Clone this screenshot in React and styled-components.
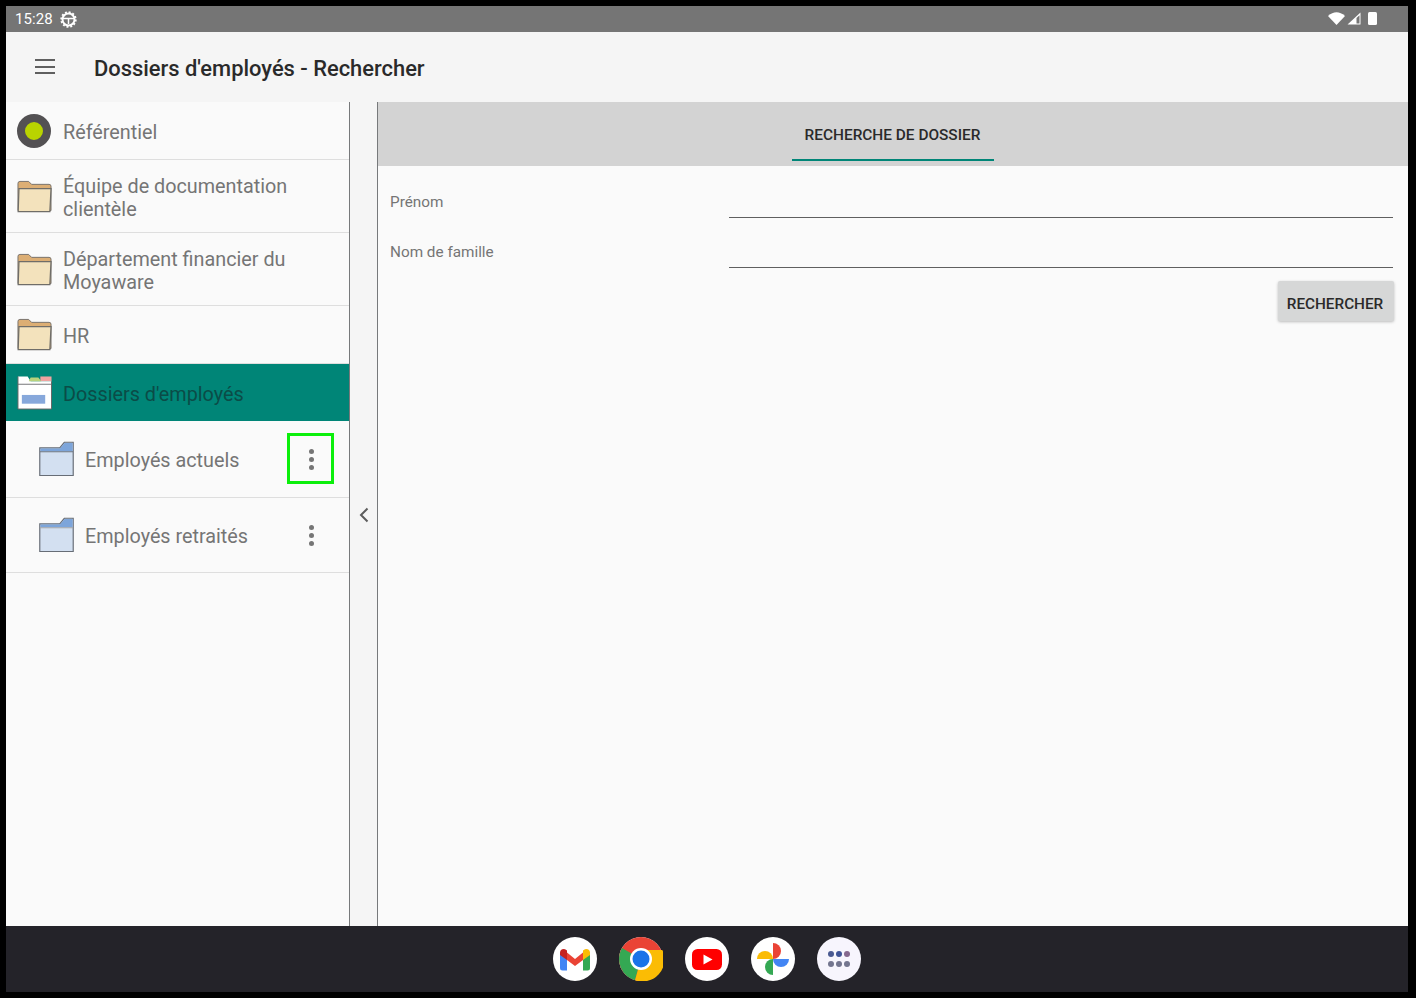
import styled, { createGlobalStyle } from "styled-components";

const GlobalStyle = createGlobalStyle`
  html, body { margin: 0; padding: 0; background: #000; }
  body { font-family: Roboto, "Liberation Sans", sans-serif; }
`;

const FolderIcon = () => (
  <svg width="35" height="33" viewBox="0 0 36 33">
    <path d="M1 31V3q0-2 2-2h9l3 3h18q2 0 2 2v25z" fill="#dcae74" stroke="#77716a" strokeWidth="1" />
    <path d="M2 8.500h33l-1.200 23.500H1.200z" fill="#f3e2bc" stroke="#6f6d68" strokeWidth="1.300" />
  </svg>
);

const FolderBlue = ({ line }) => (
  <svg width="35" height="36" viewBox="0 0 36 36">
    <path d="M.8 35V6.500h20.500L26 .8h9.200V35z" fill="#d3e0f1" stroke="#676d76" strokeWidth="1.200" />
    <path d="M1.400 10V7.200h20.200l4.700-5.700h8.300V10z" fill="#7da5da" />
    <path d="M1 10.500h34" stroke={line} strokeWidth="1.200" />
  </svg>
);

const CabinetIcon = () => (
  <svg width="35" height="36" viewBox="0 0 36 36">
    <path d="M24 6V1h11.500v5z" fill="#efa3a0" />
    <path d="M1 34.500V1h10l3 5h21.500v28.500z" fill="#fff" />
    <path d="M12 6l2-4h8L25 6z" fill="#b9d27c" />
    <path d="M1 9h34.500" stroke="#77777a" strokeWidth="1.200" />
    <path d="M1 1v33.500h34.500V6" fill="none" stroke="#666" strokeWidth="1" />
    <rect x="5" y="20" width="24" height="9" fill="#87a8db" />
  </svg>
);

const GmailIcon = () => (
  <svg width="30" height="23" viewBox="0 0 30 23">
    <path d="M0 4v16q0 2.500 2.500 2.500H7V9z" fill="#4285f4" />
    <path d="M30 4v16q0 2.500-2.500 2.500H23V9z" fill="#34a853" />
    <path d="M7 12V4.500L15 11l8-6.500V12l-8 6z" fill="#ea4335" />
    <path d="M0 5q0-4 4-4 1.500 0 3 1.500V12L0 7z" fill="#c5221f" />
    <path d="M30 5q0-4-4-4-1.500 0-3 1.500V12l7-5z" fill="#fbbc04" />
  </svg>
);

const ChromeIcon = () => (
  <svg width="44" height="44" viewBox="0 0 44 44">
    <circle cx="22" cy="22" r="22" fill="#ea4335" />
    <path d="M22 22 3 11A22 22 0 0 0 16 43.200z" fill="#34a853" />
    <path d="M22 22 16 43.200A22 22 0 0 0 43.300 13H22z" fill="#fbbc04" />
    <circle cx="22" cy="22" r="11" fill="#fff" />
    <circle cx="22" cy="22" r="8.500" fill="#1a73e8" />
  </svg>
);

const YoutubeIcon = () => (
  <svg width="30" height="21" viewBox="0 0 30 21">
    <rect width="30" height="21" rx="5.500" fill="#f00" />
    <path d="M11.500 5.500v10l9-5z" fill="#fff" />
  </svg>
);

const PhotosIcon = () => (
  <svg width="32" height="32" viewBox="0 0 32 32">
    <path d="M16 16V0a8 8 0 0 1 0 16z" fill="#ea4335" />
    <path d="M16 16h16a8 8 0 0 1-16 0z" fill="#4285f4" />
    <path d="M16 16v16a8 8 0 0 1 0-16z" fill="#34a853" />
    <path d="M16 16H0a8 8 0 0 1 16 0z" fill="#fbbc04" />
  </svg>
);

const AppsIcon = () => (
  <svg width="22" height="16" viewBox="0 0 22 16">
    <circle cx="3" cy="3" r="3" fill="#4a5a92" />
    <circle cx="11" cy="3" r="3" fill="#3f5497" />
    <circle cx="19" cy="3" r="3" fill="#85688e" />
    <circle cx="3" cy="13" r="3" fill="#73758f" />
    <circle cx="11" cy="13" r="3" fill="#73758f" />
    <circle cx="19" cy="13" r="3" fill="#73758f" />
  </svg>
);

const App = () => {
  return (
    <Screen>
      <GlobalStyle />
      <StatusBar>
        <StatusLeft>
          <span>15:28</span>
          <svg width="17" height="17" viewBox="0 0 17 17">
            <circle cx="8.500" cy="8.500" r="6" fill="none" stroke="#fff" strokeWidth="2" />
            <circle cx="8.500" cy="8.500" r="7.300" fill="none" stroke="#fff" strokeWidth="1.800" strokeDasharray="2 1.820" />
            <path d="M3 7.500h11M8.500 8v5" stroke="#fff" strokeWidth="1.500" />
          </svg>
        </StatusLeft>
        <StatusRight>
          <svg width="17" height="13" viewBox="0 0 17 13">
            <path d="M0 4Q8.500-3.500 17 4L8.500 13z" fill="#fff" />
          </svg>
          <svg width="14" height="13" viewBox="0 0 14 13">
            <path d="M.5 12.500 13.500.5v12zM9.500 6v5.500h3V3.200z" fill="#fff" fillRule="evenodd" />
          </svg>
          <Battery />
        </StatusRight>
      </StatusBar>

      <AppBar>
        <Burger>
          <i /><i /><i />
        </Burger>
        <Title>Dossiers d'employés - Rechercher</Title>
      </AppBar>

      <Main>
        <Tree>
          <Row $h={58}>
            <Status />
            <RowLabel>Référentiel</RowLabel>
          </Row>
          <Row $h={73}>
            <IconSlot><FolderIcon /></IconSlot>
            <RowLabel>Équipe de documentation<br />clientèle</RowLabel>
          </Row>
          <Row $h={73}>
            <IconSlot><FolderIcon /></IconSlot>
            <RowLabel>Département financier du<br />Moyaware</RowLabel>
          </Row>
          <Row $h={58}>
            <IconSlot><FolderIcon /></IconSlot>
            <RowLabel>HR</RowLabel>
          </Row>
          <Row $h={57} $selected>
            <IconSlot><CabinetIcon /></IconSlot>
            <RowLabel $selected>Dossiers d'employés</RowLabel>
          </Row>
          <Row $h={77} $child>
            <IconSlot><FolderBlue line="#6d7480" /></IconSlot>
            <RowLabel>Employés actuels</RowLabel>
            <MoreButton aria-label="Plus"><i /><i /><i /></MoreButton>
            <Highlight />
          </Row>
          <Row $h={75} $child>
            <IconSlot><FolderBlue line="#a3a5a8" /></IconSlot>
            <RowLabel>Employés retraités</RowLabel>
            <MoreButton aria-label="Plus"><i /><i /><i /></MoreButton>
          </Row>
        </Tree>

        <Collapse>
          <svg width="10" height="16" viewBox="0 0 10 16">
            <path d="M8.500 1.500 2 8l6.500 6.500" fill="none" stroke="#5c5c5c" strokeWidth="2" />
          </svg>
        </Collapse>

        <Content>
          <Tabs>
            <Tab>RECHERCHE DE DOSSIER</Tab>
          </Tabs>
          <Form>
            <Field>
              <FieldLabel>Prénom</FieldLabel>
              <FieldInput />
            </Field>
            <Field>
              <FieldLabel>Nom de famille</FieldLabel>
              <FieldInput />
            </Field>
            <Actions>
              <SearchButton>RECHERCHER</SearchButton>
            </Actions>
          </Form>
        </Content>
      </Main>

      <Dock>
        <DockIcon><GmailIcon /></DockIcon>
        <DockIcon><ChromeIcon /></DockIcon>
        <DockIcon><YoutubeIcon /></DockIcon>
        <DockIcon><PhotosIcon /></DockIcon>
        <DockIcon $tint><AppsIcon /></DockIcon>
      </Dock>
    </Screen>
  );
};

const Screen = styled.div`
  width: 1416px;
  height: 998px;
  box-sizing: border-box;
  padding: 6px 8px 6px 6px;
  background: #000;
  display: flex;
  flex-direction: column;
  overflow: hidden;
`;

const StatusBar = styled.div`
  height: 26px;
  flex: none;
  background: #757575;
  color: #fff;
  display: flex;
  align-items: center;
  justify-content: space-between;
  padding: 0 31px 0 9px;
`;

const StatusLeft = styled.div`
  display: flex;
  align-items: center;
  gap: 7px;
  font-size: 15px;
  letter-spacing: 0.1px;
`;

const StatusRight = styled.div`
  display: flex;
  align-items: center;
  gap: 2px;
  margin-top: -1px;
`;

const Battery = styled.div`
  width: 9px;
  height: 13px;
  margin-left: 5px;
  background: #fff;
  border-radius: 1.500px;
`;

const AppBar = styled.div`
  height: 70px;
  flex: none;
  background: #f5f5f5;
  display: flex;
  align-items: center;
  padding-left: 29px;
  box-sizing: border-box;
`;

const Burger = styled.div`
  width: 20px;
  display: flex;
  flex-direction: column;
  gap: 4.500px;
  margin-top: -1px;

  i {
    display: block;
    height: 2px;
    background: #5f5f5f;
  }
`;

const Title = styled.h1`
  margin: 0 0 0 39px;
  padding-top: 2px;
  font-size: 21.900px;
  font-weight: 500;
  color: #2a2a2a;
`;

const Main = styled.div`
  flex: 1;
  min-height: 0;
  display: flex;
`;

const Tree = styled.div`
  width: 344px;
  flex: none;
  box-sizing: border-box;
  background: #fafafa;
  border-right: 1px solid #77797b;
`;

const Row = styled.div`
  position: relative;
  height: ${(p) => p.$h}px;
  box-sizing: border-box;
  display: flex;
  align-items: center;
  gap: 11px;
  padding-left: ${(p) => (p.$child ? 33 : 11)}px;
  background: ${(p) => (p.$selected ? "#008577" : "transparent")};
  border-bottom: ${(p) => (p.$selected ? "none" : "1px solid #dedede")};
`;

const Status = styled.div`
  width: 18px;
  height: 18px;
  flex: none;
  margin-right: 1px;
  border: 8.500px solid #535153;
  border-radius: 50%;
  background: #b9d400;
`;

const IconSlot = styled.div`
  width: 35px;
  height: 36px;
  flex: none;
  display: flex;
  align-items: center;
  justify-content: center;
`;

const RowLabel = styled.div`
  padding-top: 3px;
  font-size: 19.800px;
  line-height: 23px;
  color: ${(p) => (p.$selected ? "#0b4c47" : "#757575")};
`;

const MoreButton = styled.button`
  position: absolute;
  left: 293px;
  top: 50%;
  transform: translateY(-50%);
  width: 24px;
  height: 30px;
  padding: 0;
  border: 0;
  background: transparent;
  display: flex;
  flex-direction: column;
  align-items: center;
  justify-content: center;
  gap: 3px;

  i {
    width: 5px;
    height: 5px;
    border-radius: 50%;
    background: #757575;
  }
`;

const Highlight = styled.div`
  position: absolute;
  left: 281px;
  top: 12px;
  width: 47px;
  height: 51px;
  box-sizing: border-box;
  border: 3px solid #0bef0b;
  pointer-events: none;
`;

const Collapse = styled.div`
  width: 27px;
  flex: none;
  background: #f5f5f5;
  display: flex;
  align-items: center;
  justify-content: center;
  padding-top: 2px;
  border-right: 1px solid #77797b;
`;

const Content = styled.div`
  flex: 1;
  min-width: 0;
  background: #fafafa;
  display: flex;
  flex-direction: column;
`;

const Tabs = styled.div`
  height: 64px;
  flex: none;
  background: #d3d3d3;
  display: flex;
  justify-content: center;
  box-sizing: border-box;
  padding-right: 1px;
`;

const Tab = styled.div`
  width: 202px;
  height: 59px;
  box-sizing: border-box;
  border-bottom: 2px solid #008577;
  display: flex;
  align-items: center;
  justify-content: center;
  font-size: 15.400px;
  font-weight: 500;
  color: #2a2a2a;
  padding-top: 8px;
`;

const Form = styled.div`
  display: flex;
  flex-direction: column;
  padding: 0 15px 0 12px;
`;

const Field = styled.div`
  height: 50px;
  display: flex;
  align-items: stretch;
  padding-top: 2px;
  box-sizing: border-box;
`;

const FieldLabel = styled.div`
  width: 339px;
  flex: none;
  font-size: 15.300px;
  color: #757575;
  padding-top: 26px;
  line-height: 17px;
  height: 18px;
`;

const FieldInput = styled.div`
  flex: 1;
  height: 50px;
  box-sizing: border-box;
  border-bottom: 1px solid #5f5f5f;
`;

const Actions = styled.div`
  display: flex;
  justify-content: flex-end;
  margin-top: 15px;
  margin-right: -1px;
`;

const SearchButton = styled.button`
  width: 116px;
  height: 40px;
  padding: 5px 2px 0 0;
  border: 0;
  border-radius: 2px;
  background: #d6d7d7;
  box-shadow: 0 1px 3px rgba(0, 0, 0, 0.25);
  font-family: Roboto, "Liberation Sans", sans-serif;
  font-size: 15.300px;
  font-weight: 500;
  color: #2a2a2a;
`;

const Dock = styled.div`
  height: 66px;
  flex: none;
  background: #242329;
  display: flex;
  align-items: center;
  justify-content: center;
  gap: 22px;
`;

const DockIcon = styled.div`
  width: 44px;
  height: 44px;
  border-radius: 50%;
  background: ${(p) => (p.$tint ? "#f7f5fd" : "#fff")};
  display: flex;
  align-items: center;
  justify-content: center;
`;

export default App;
